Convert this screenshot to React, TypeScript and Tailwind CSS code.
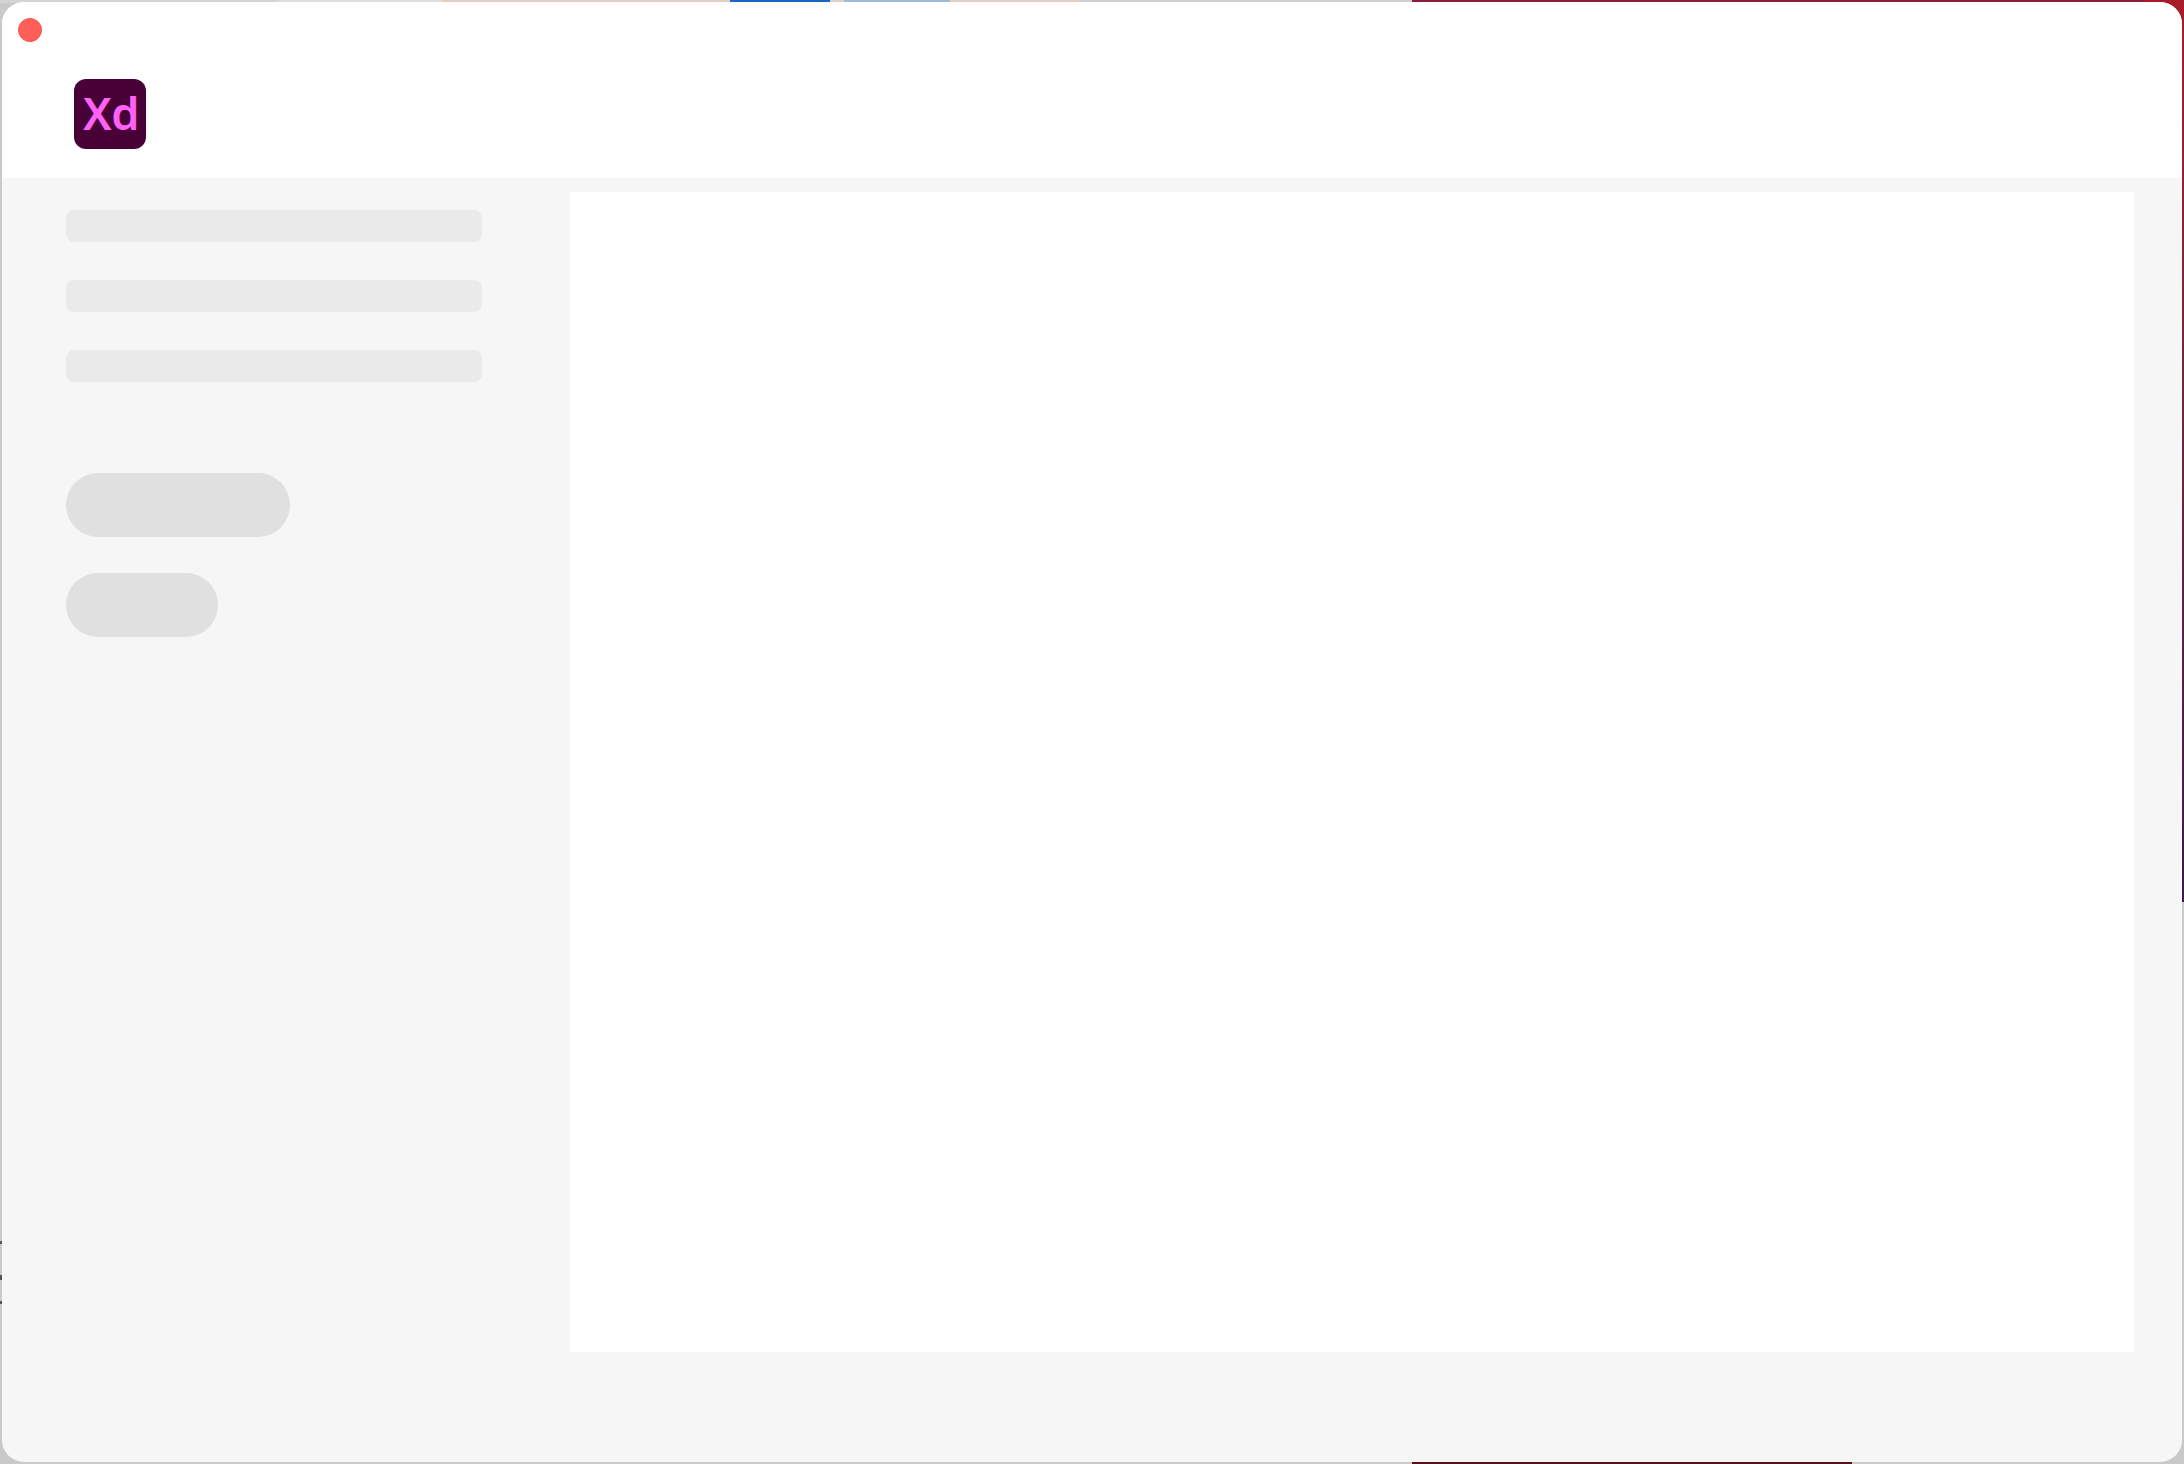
import React from 'react';

const Backdrop: React.FC = () => (
  <div className="absolute inset-0 bg-[#c9c9c9]">
    <div className="flex h-[3px]">
      <div className="w-[276px] bg-[#d4d4d4]" />
      <div className="w-[166px] bg-[#dcdcdc]" />
      <div className="w-[288px] bg-[#e0cfc4]" />
      <div className="w-[100px] bg-[#1a66c4]" />
      <div className="w-[14px] bg-[#e0cfc4]" />
      <div className="w-[106px] bg-[#9dbcdc]" />
      <div className="w-[128px] bg-[#e0cfc4]" />
      <div className="w-[334px] bg-[#cfcfcf]" />
      <div className="flex-1 bg-[#8f1a3c]" />
    </div>
    <div className="absolute top-0 right-0 h-[902px] w-[40px] bg-gradient-to-b from-[#a81c28] to-[#3a1a4a]" />
    <div className="absolute bottom-0 left-[1412px] h-[3px] w-[440px] bg-[#5a0f20]" />
    <div className="absolute top-[1241px] left-0 h-[3px] w-[2px] bg-[#555555]" />
    <div className="absolute top-[1275px] left-0 h-[5px] w-[2px] bg-[#555555]" />
    <div className="absolute top-[1301px] left-0 h-[3px] w-[2px] bg-[#555555]" />
  </div>
);

const XdLogo: React.FC = () => (
  <div className="flex h-[70px] w-[72px] items-center justify-center rounded-[12px] bg-[#470137] pb-[4px] pl-[2px]">
    <span className="font-['Noto_Sans',sans-serif] text-[45px] leading-none font-semibold tracking-[-0.5px] text-[#ff61f6]">
      Xd
    </span>
  </div>
);

const Bar: React.FC = () => <div className="h-[32px] w-[416px] rounded-[8px] bg-[#eaeaea]" />;

const App: React.FC = () => (
  <div className="relative h-screen w-screen overflow-hidden">
    <Backdrop />
    <div className="relative m-[2px] flex h-[1460px] flex-col overflow-hidden rounded-[22px] bg-[#f6f6f6]">
      <header className="flex h-[176px] shrink-0 flex-col bg-white pt-[16px] pl-[16px]">
        <div className="h-[24px] w-[24px] rounded-full border border-[#f0564e] bg-[#ff5f57]" />
        <div className="mt-[37px] ml-[56px]">
          <XdLogo />
        </div>
      </header>
      <div className="flex flex-1 pr-[48px]">
        <aside className="flex w-[568px] shrink-0 flex-col pt-[32px] pl-[64px]">
          <div className="flex flex-col gap-[38px]">
            <Bar />
            <Bar />
            <Bar />
          </div>
          <div className="mt-[91px] flex flex-col gap-[36px]">
            <div className="h-[64px] w-[224px] rounded-[32px] bg-[#e0e0e0]" />
            <div className="h-[64px] w-[152px] rounded-[32px] bg-[#e0e0e0]" />
          </div>
        </aside>
        <main className="mt-[14px] h-[1160px] flex-1 bg-white" />
      </div>
    </div>
  </div>
);

export default App;
